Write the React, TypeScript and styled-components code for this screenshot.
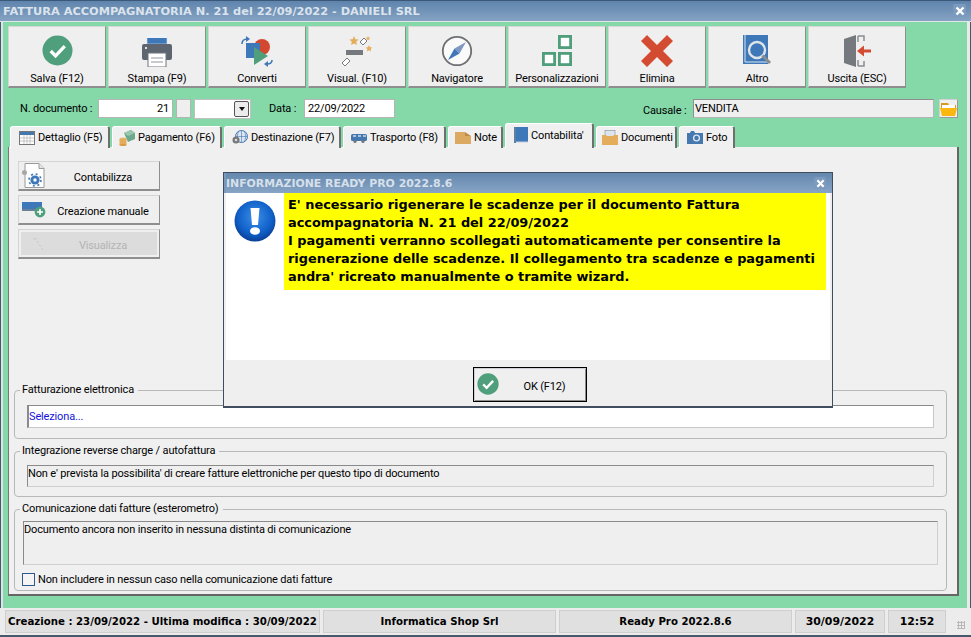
import React from "react";
import styled, { createGlobalStyle } from "styled-components";

const GlobalReset = createGlobalStyle`
  html, body { margin: 0; padding: 0; height: 100%; overflow: hidden; }
  #root { height: 100%; }
  * { box-sizing: border-box; }
  svg { flex: none; }
  button, input { letter-spacing: inherit; }
`;

const uiFont = `Roboto, "Liberation Sans", Arial, sans-serif`;
const boldFont = `"DejaVu Sans", Verdana, sans-serif`;

const Win = styled.div`
  position: relative;
  width: 971px;
  height: 637px;
  display: flex;
  flex-direction: column;
  font-family: ${uiFont};
  font-size: 11px;
  letter-spacing: -0.15px;
  color: #000;
  background: #85d8a8;
`;

const TitleBar = styled.div`
  height: 22px;
  flex: none;
  display: flex;
  align-items: center;
  justify-content: space-between;
  padding: 0 5px 1px 3px;
  background: linear-gradient(#5f84ac, #85a3c4);
  border-top: 1px solid #3c5878;
  border-bottom: 1px solid #dfe8e4;
  font-family: ${boldFont};
  font-weight: 700;
  font-size: 11.33px;
  letter-spacing: 0;
  color: #dbe3ec;
`;

const CloseBox = styled.span<{ $small?: boolean }>`
  width: ${(p) => (p.$small ? 12 : 13)}px;
  height: ${(p) => (p.$small ? 12 : 13)}px;
  display: flex;
  align-items: center;
  justify-content: center;
  background: #7b9abd;
  border-radius: 2px;
`;

const Main = styled.div`
  flex: 1;
  min-height: 0;
  display: flex;
  flex-direction: column;
  padding: 4px 4px 12px 5px;
  border-left: 1px solid #47586c;
  border-right: 1px solid #47586c;
  box-shadow: inset 2px 0 0 #dfe5e4, inset -3px 0 0 #e6ebe8;
`;

const Toolbar = styled.div`
  display: flex;
  gap: 2px;
  margin-left: 2px;
`;

const ToolButton = styled.button`
  width: 98px;
  height: 62px;
  padding: 8px 0 0;
  display: flex;
  flex-direction: column;
  align-items: center;
  justify-content: space-between;
  background: #efefef;
  border: 1px solid #d6d6d6;
  border-right: 1px solid #8e8e8e;
  border-bottom: 2px solid #8e8e8e;
  font: inherit;
  color: #000;
`;

const ToolLabel = styled.span`
  display: block;
  line-height: 14px;
`;

const FormRow = styled.div`
  display: flex;
  align-items: flex-start;
  height: 20px;
  margin-top: 11px;
  padding-left: 14px;
`;

const FieldLabel = styled.label<{ $w: number; $low?: boolean }>`
  width: ${(p) => p.$w}px;
  line-height: ${(p) => (p.$low ? 23 : 19)}px;
  white-space: nowrap;
`;

const TextBox = styled.input<{ $w: number; $right?: boolean; $off?: boolean }>`
  width: ${(p) => p.$w}px;
  height: 19px;
  padding: ${(p) => (p.$off ? "0 0 0 1px" : "0 3px")};
  border: 1px solid #b4b4b4;
  border-top-color: ${(p) => (p.$off ? "#8e8e8e" : "#b4b4b4")};
  border-left-color: ${(p) => (p.$off ? "#8e8e8e" : "#b4b4b4")};
  border-radius: 0;
  outline: none;
  font: inherit;
  color: #000;
  text-align: ${(p) => (p.$right ? "right" : "left")};
  background: ${(p) => (p.$off ? "#efefef" : "#fff")};
`;

const SmallKey = styled.span`
  width: 15px;
  height: 19px;
  margin: 0 3px;
  background: #efefef;
  border: 1px solid #b4b4b4;
`;

const Combo = styled.div`
  width: 57px;
  height: 20px;
  display: flex;
  justify-content: flex-end;
  align-items: center;
  padding-right: 1px;
  background: #fff;
  border: 1px solid #c0c0c0;
  margin-right: 18px;
`;

const ComboArrow = styled.span`
  width: 15px;
  height: 16px;
  display: flex;
  align-items: center;
  justify-content: center;
  background: #ececec;
  border: 1px solid #555;
  border-radius: 2px;
  &::after {
    content: "";
    border: 3px solid transparent;
    border-top: 4px solid #111;
    margin-top: 3px;
  }
`;

const Causale = styled.div`
  margin-left: auto;
  display: flex;
  align-items: flex-start;
  margin-right: 8px;
`;

const FolderButton = styled.span`
  width: 19px;
  height: 19px;
  margin-left: 5px;
  display: flex;
  align-items: center;
  justify-content: center;
  background: #efefef;
  border: 1px solid #d0d0d0;
  border-right-color: #9a9a9a;
  border-bottom-color: #9a9a9a;
`;

const TabStrip = styled.div`
  display: flex;
  align-items: flex-end;
  gap: 2px;
  height: 25px;
  margin-top: 4px;
  margin-left: 4px;
  margin-bottom: -1px;
  position: relative;
  z-index: 1;
`;

const Tab = styled.div<{ $w: number; $pad: number; $active?: boolean }>`
  width: ${(p) => p.$w}px;
  height: ${(p) => (p.$active ? 25 : 22)}px;
  display: flex;
  align-items: center;
  gap: 3px;
  padding-left: ${(p) => p.$pad}px;
  padding-bottom: ${(p) => (p.$active ? 2 : 0)}px;
  background: #f0f0f0;
  border-top: 1px solid #fff;
  border-left: 1px solid #fff;
  border-right: 2px solid #6f6f6f;
  border-radius: 3px 3px 0 0;
  white-space: nowrap;
`;

const Panel = styled.div`
  flex: 1;
  min-height: 0;
  margin-left: 2px;
  width: 951px;
  display: flex;
  flex-direction: column;
  padding: 14px 10px 3px 5px;
  background: #f0f0f0;
  border-left: 1px solid #777;
  border-right: 2px solid #666;
  border-bottom: 2px solid #666;
`;

const Actions = styled.div`
  display: flex;
  flex-direction: column;
  gap: 4px;
  margin-left: 4px;
  width: 142px;
`;

const ActionButton = styled.button<{ $off?: boolean }>`
  position: relative;
  height: 30px;
  padding: 3px 0 0 28px;
  display: flex;
  align-items: center;
  justify-content: center;
  font: inherit;
  color: ${(p) => (p.$off ? "#b4b4b4" : "#000")};
  background: ${(p) => (p.$off ? "#dcdcdc" : "#efefef")};
  border: 1px solid #d4d4d4;
  border-right: 1px solid #8e8e8e;
  border-bottom: 2px solid #8e8e8e;
  box-shadow: ${(p) => (p.$off ? "inset 0 0 0 2px #efefef" : "none")};
`;

const ActionIcon = styled.span`
  position: absolute;
  left: 3px;
  top: 0;
  height: 28px;
  display: flex;
  align-items: center;
`;

const Groups = styled.div`
  margin-top: auto;
  display: flex;
  flex-direction: column;
  gap: 5px;
`;

const Group = styled.fieldset`
  margin: 0;
  padding: 0;
  min-width: 0;
  border: 1px solid #b8b8b8;
  border-radius: 4px;
`;

const GroupTitle = styled.legend`
  margin-left: 5px;
  padding: 0 4px 0 2px;
  line-height: 14px;
`;

const GroupBody = styled.div<{ $top: number; $bottom: number; $side: number }>`
  padding: ${(p) => `${p.$top}px ${p.$side}px ${p.$bottom}px`};
`;

const SelectField = styled.div`
  height: 23px;
  line-height: 22px;
  color: #1414e0;
  background: #fff;
  border: 1px solid #c8c8c8;
  border-top-color: #8a8a8a;
  border-left: 2px solid #8a8a8a;
`;

const ReadOnlyField = styled.div<{ $h: number }>`
  height: ${(p) => p.$h}px;
  padding: 0;
  line-height: 16px;
  background: #efefef;
  border: 1px solid #cfcfcf;
  border-top-color: #8a8a8a;
  border-left-color: #8a8a8a;
`;

const CheckRow = styled.label`
  display: flex;
  align-items: center;
  gap: 3px;
  height: 14px;
  margin-top: 7px;
  margin-left: -1px;
`;

const CheckBoxMark = styled.span`
  width: 13px;
  height: 13px;
  background: #f4f4f4;
  border: 1px solid #2c5a8c;
`;

const StatusBar = styled.div`
  height: 29px;
  flex: none;
  display: flex;
  align-items: center;
  gap: 3px;
  padding: 0 0 0 5px;
  background: #ececec;
  border-bottom: 2px solid #47586c;
  font-family: ${boldFont};
  font-weight: 700;
  letter-spacing: 0;
`;

const StatusCell = styled.div<{ $w: number; $left?: boolean; $digits?: boolean }>`
  width: ${(p) => p.$w}px;
  height: 23px;
  display: flex;
  align-items: center;
  justify-content: ${(p) => (p.$left ? "flex-start" : "center")};
  padding-left: ${(p) => (p.$left ? 2 : 0)}px;
  font-size: ${(p) => (p.$digits ? 10.9 : 10.2)}px;
  background: #e0e0e0;
  border: 1px solid #cfcfcf;
  white-space: nowrap;
`;

const Grip = styled.span`
  margin-left: 8px;
  margin-top: 6px;
  width: 8px;
  height: 8px;
  background: radial-gradient(circle, #b8b8b8 1px, transparent 1.2px) 0 0 / 3px 3px;
`;

const Dialog = styled.div`
  position: absolute;
  left: 223px;
  top: 172px;
  width: 610px;
  height: 236px;
  display: flex;
  flex-direction: column;
  background: #efefef;
  border: 1px solid #3f4d5f;
  border-bottom-width: 2px;
  z-index: 5;
`;

const DialogTitle = styled.div`
  height: 20px;
  flex: none;
  display: flex;
  align-items: center;
  justify-content: space-between;
  padding: 0 6px 0 0;
  background: linear-gradient(#6488ae, #87a4c5);
  border-left: 2px solid #7d99ba;
  font-family: ${boldFont};
  font-weight: 700;
  font-size: 10.9px;
  letter-spacing: 0;
  color: #d7e0ea;
`;

const DialogBody = styled.div`
  height: 167px;
  flex: none;
  margin: 0 2px;
  display: flex;
  background: #fff;
`;

const DialogIcon = styled.div`
  width: 58px;
  flex: none;
  padding: 7px 0 0 8px;
`;

const Message = styled.div`
  width: 542px;
  height: 97px;
  padding: 3px 0 0 4px;
  background: #ffff00;
  font-family: ${boldFont};
  font-weight: 700;
  font-size: 12.9px;
  letter-spacing: 0;
  line-height: 18px;
  white-space: nowrap;
  color: #000;
`;

const DialogFooter = styled.div`
  flex: 1;
  display: flex;
  padding: 7px 0 0 249px;
`;

const OkButton = styled.button`
  position: relative;
  width: 114px;
  height: 35px;
  padding: 3px 0 0 29px;
  font: inherit;
  color: #000;
  background: #efefef;
  border: 1px solid #000;
  box-shadow: inset 1px 1px 0 #cfcfd6, inset -1px -1px 0 #8e8e8e;
`;

const OkIcon = styled.span`
  position: absolute;
  left: 3px;
  top: 5px;
  display: flex;
`;

const Check = ({ size }: { size: number }) => (
  <svg width={size} height={size} viewBox="0 0 32 32">
    <circle cx="16" cy="16" r="15.5" fill="#4f9f7d" />
    <path d="M9 16.5l5 5 9.5-10" fill="none" stroke="#fff" strokeWidth="3.4" />
  </svg>
);

const PrintIcon = () => (
  <svg width="32" height="32" viewBox="0 0 32 32">
    <rect x="6" y="0" width="20" height="9" fill="#3f78b8" stroke="#d8e4f0" strokeWidth="0.6" />
    <rect x="6" y="0" width="20" height="3" fill="#eef3f8" />
    <rect x="1" y="9" width="30" height="16" rx="2" fill="#5d6670" />
    <rect x="4" y="12" width="2" height="2" fill="#e0e0e0" />
    <rect x="7" y="18" width="18" height="14" fill="#fff" stroke="#6f7780" strokeWidth="1" />
    <path d="M10 23h12M10 27h12" stroke="#8f979f" strokeWidth="1" />
  </svg>
);

const ConvertIcon = () => (
  <svg width="32" height="32" viewBox="0 0 32 32">
    <circle cx="21" cy="12" r="8" fill="#d3492f" />
    <rect x="5" y="8" width="14" height="15" fill="#3f78b8" />
    <path d="M13 12l14 9-14 9z" fill="#4f9f7d" />
    <path d="M1 9c0-3 2-5 5-5" fill="none" stroke="#3f78b8" strokeWidth="1.6" />
    <path d="M5 1l4 3-4 3z" fill="#3f78b8" />
    <path d="M31 25c0 3-2 4-5 4" fill="none" stroke="#3f78b8" strokeWidth="1.6" />
    <path d="M27 26l-4 3 4 3z" fill="#3f78b8" />
  </svg>
);

const WandIcon = () => (
  <svg width="32" height="32" viewBox="0 0 32 32">
    <rect x="5" y="15" width="17" height="5" fill="#75787c" />
    <path d="M19 7l4-4 3 3-4 4z" fill="#fff" stroke="#77797c" />
    <path d="M1 28l5-5 3 3-5 5z" fill="#fff" stroke="#77797c" />
    <path d="M13 1l1.4 3.2 3.2.4-2.4 2.2.7 3.2-2.9-1.6-2.9 1.6.7-3.2L8.4 4.6l3.2-.4z" fill="#e3ad5c" />
    <path d="M28 10l1 2.2 2.3.3-1.7 1.6.5 2.3-2.1-1.1-2.1 1.1.5-2.3-1.7-1.6 2.3-.3z" fill="#e3ad5c" />
    <path d="M27 1l.7 1.5 1.6.2-1.2 1.1.3 1.6-1.4-.8-1.4.8.3-1.6-1.2-1.1 1.6-.2z" fill="#e3ad5c" />
  </svg>
);

const CompassIcon = () => (
  <svg width="32" height="32" viewBox="0 0 32 32">
    <circle cx="16" cy="16" r="14.2" fill="#fafafa" stroke="#6d6f72" strokeWidth="1.8" />
    <path d="M25 7L18.5 18.5 13.5 13.5z" fill="#7f98c2" />
    <path d="M7 25l6.5-11.5 5 5z" fill="#3f78b8" />
  </svg>
);

const GridIcon = () => (
  <svg width="32" height="32" viewBox="0 0 32 32">
    <g fill="#fff" stroke="#4f9f7d" strokeWidth="2.8">
      <rect x="18.4" y="1.4" width="11.2" height="11.2" />
      <rect x="2.4" y="18.4" width="11.2" height="11.2" />
      <rect x="18.4" y="18.4" width="11.2" height="11.2" />
    </g>
  </svg>
);

const CrossIcon = () => (
  <svg width="32" height="32" viewBox="0 0 32 32">
    <path d="M6 0l10 10L26 0l6 6-10 10 10 10-6 6-10-10L6 32l-6-6 10-10L0 6z" fill="#d34b30" />
  </svg>
);

const BookSearchIcon = () => (
  <svg width="32" height="32" viewBox="0 0 32 32">
    <rect x="2" y="0" width="25" height="29" fill="#3f78b8" />
    <path d="M4 0v27h23" fill="none" stroke="#d9e5f0" strokeWidth="1" />
    <circle cx="16" cy="15" r="8" fill="#3f78b8" stroke="#dfe4e8" strokeWidth="2.4" />
    <path d="M21.5 20.5L29 28" stroke="#8a8d90" strokeWidth="3" />
  </svg>
);

const DoorIcon = () => (
  <svg width="32" height="32" viewBox="0 0 32 32">
    <path d="M17 1v6M17 25v6M17 1h6v5M17 31h6v-5" fill="none" stroke="#8a8d90" strokeWidth="1.5" />
    <path d="M3 4L15 0v32L3 28z" fill="#75787c" />
    <path d="M30 14.5v3H20v-3z" fill="#d34b30" />
    <path d="M16 16l7-5.5v11z" fill="#d34b30" />
  </svg>
);

const CalendarTab = () => (
  <svg width="16" height="14" viewBox="0 0 16 14">
    <rect x="0.5" y="0.5" width="15" height="13" fill="#fff" stroke="#777" />
    <rect x="1" y="1" width="14" height="3" fill="#4678b0" />
    <path d="M1 7h14M1 10h14M5 4v9M8 4v9M11 4v9" stroke="#b0b0b0" strokeWidth="0.7" />
  </svg>
);

const MoneyTab = () => (
  <svg width="16" height="16" viewBox="0 0 16 16">
    <path d="M5 3l7-3 4 3v6l-7 3z" fill="#6ca88b" />
    <path d="M5 3l7-3 4 3-7 3z" fill="#9ac6ae" />
    <ellipse cx="4" cy="9" rx="3.5" ry="1.6" fill="#e6b469" />
    <rect x="0.5" y="9" width="7" height="6" fill="#e3ad5c" />
    <ellipse cx="4" cy="15" rx="3.5" ry="1" fill="#d79c45" />
  </svg>
);

const GlobeTab = () => (
  <svg width="16" height="16" viewBox="0 0 16 16">
    <circle cx="9.5" cy="6.5" r="6" fill="#dbe5f1" stroke="#4678b0" />
    <path d="M3.5 6.5h12M9.5.5v12M6.5 1.5c-1.5 3-1.5 7 0 10M12.5 1.5c1.5 3 1.5 7 0 10" fill="none" stroke="#4678b0" strokeWidth="0.6" />
    <circle cx="4" cy="10" r="3.5" fill="#777" />
    <circle cx="4" cy="10" r="1.3" fill="#ddd" />
  </svg>
);

const TruckTab = () => (
  <svg width="16" height="12" viewBox="0 0 16 12">
    <rect x="0" y="2" width="16" height="7" rx="1.5" fill="#4678b0" />
    <path d="M2 4h3M7 4h3M12 4h3" stroke="#cfdcec" strokeWidth="1.4" />
    <circle cx="4" cy="9.5" r="1.6" fill="#777" />
    <circle cx="12" cy="9.5" r="1.6" fill="#777" />
  </svg>
);

const NoteTab = () => (
  <svg width="16" height="16" viewBox="0 0 16 16">
    <path d="M0 2h10v4h6v8H0z" fill="#dba95f" />
    <path d="M10 2l6 4h-6z" fill="#bd8b45" />
  </svg>
);

const BookTab = () => (
  <svg width="14" height="16" viewBox="0 0 14 16">
    <rect x="0" y="0" width="14" height="15" fill="#3f78b8" />
    <rect x="0" y="0" width="2" height="16" fill="#5f7f9f" />
    <path d="M2 15h12" stroke="#ccd" />
  </svg>
);

const DocsTab = () => (
  <svg width="16" height="16" viewBox="0 0 16 16">
    <rect x="3" y="0.5" width="10" height="8" fill="#dce4ee" stroke="#8e9aa8" strokeWidth="0.7" />
    <path d="M0 5h4l1 1h6l1-1h4v10H0z" fill="#e3ad5c" />
  </svg>
);

const CameraTab = () => (
  <svg width="16" height="13" viewBox="0 0 16 13">
    <path d="M0 2h3l1-2h3l1 2h8v11H0z" fill="#4678b0" />
    <circle cx="9.5" cy="7" r="3.6" fill="#dbe5f1" />
    <circle cx="9.5" cy="7" r="2.2" fill="#4678b0" />
  </svg>
);

const FolderIcon = () => (
  <svg width="17" height="14" viewBox="0 0 17 14">
    <path d="M1 1h7l1 2h7v3H1z" fill="#d99a1c" />
    <rect x="2" y="3" width="13" height="3" fill="#fff" />
    <path d="M0 6h17l-2 8H2z" fill="#f9b70f" />
  </svg>
);

const GearDocIcon = () => (
  <svg width="24" height="26" viewBox="0 0 24 26">
    <path d="M3 .5h14l5 5v19H3z" fill="#fff" stroke="#9a9a9a" />
    <path d="M17 .5v5h5" fill="#e4e4e4" stroke="#9a9a9a" />
    <circle cx="2.5" cy="9.5" r="2.5" fill="#a8a8a8" />
    <circle cx="13" cy="17" r="4.6" fill="#3f78b8" />
    <circle cx="13" cy="17" r="6" fill="none" stroke="#3f78b8" strokeWidth="1.6" strokeDasharray="2 2.7" />
    <circle cx="13" cy="17" r="1.7" fill="#fff" />
  </svg>
);

const CardPlusIcon = () => (
  <svg width="24" height="16" viewBox="0 0 24 16">
    <rect x="0" y="0" width="20" height="8" fill="#3f78b8" />
    <rect x="0" y="7" width="19" height="2" fill="#6a7f98" />
    <circle cx="18" cy="10" r="5.4" fill="#4f9f7d" />
    <path d="M15 10h6M18 7v6" stroke="#fff" strokeWidth="1.6" />
  </svg>
);

const WandFaint = () => (
  <svg width="24" height="24" viewBox="0 0 24 24">
    <path d="M13 6l8 12M13 6l-2 2" stroke="#c4c4c4" strokeWidth="1" strokeDasharray="2 2" fill="none" />
  </svg>
);

const InfoIcon = () => (
  <svg width="42" height="42" viewBox="0 0 42 42">
    <defs>
      <radialGradient id="infoBall" cx="50%" cy="40%" r="60%">
        <stop offset="0%" stopColor="#3c8fe8" />
        <stop offset="70%" stopColor="#0f5fc8" />
        <stop offset="100%" stopColor="#0a3f96" />
      </radialGradient>
    </defs>
    <circle cx="21" cy="21" r="20.5" fill="url(#infoBall)" />
    <path d="M16.5 8h9l-1.5 17h-6z" fill="#fff" />
    <ellipse cx="21" cy="31" rx="5" ry="3.8" fill="#fff" />
  </svg>
);

const XMark = ({ size }: { size: number }) => (
  <svg width={size} height={size} viewBox="0 0 10 10">
    <path d="M1.5 1.5l7 7M8.5 1.5l-7 7" stroke="#fff" strokeWidth="2.4" />
  </svg>
);

const tools = [
  { label: "Salva (F12)", icon: <Check size={31} /> },
  { label: "Stampa (F9)", icon: <PrintIcon /> },
  { label: "Converti", icon: <ConvertIcon /> },
  { label: "Visual. (F10)", icon: <WandIcon /> },
  { label: "Navigatore", icon: <CompassIcon /> },
  { label: "Personalizzazioni", icon: <GridIcon /> },
  { label: "Elimina", icon: <CrossIcon /> },
  { label: "Altro", icon: <BookSearchIcon /> },
  { label: "Uscita (ESC)", icon: <DoorIcon /> },
];

const tabs = [
  { label: "Dettaglio (F5)", w: 100, pad: 8, icon: <CalendarTab /> },
  { label: "Pagamento (F6)", w: 110, pad: 6, icon: <MoneyTab /> },
  { label: "Destinazione (F7)", w: 117, pad: 7, icon: <GlobeTab /> },
  { label: "Trasporto (F8)", w: 103, pad: 7, icon: <TruckTab /> },
  { label: "Note", w: 55, pad: 6, icon: <NoteTab /> },
  { label: "Contabilita'", w: 89, pad: 8, icon: <BookTab />, active: true },
  { label: "Documenti", w: 81, pad: 5, icon: <DocsTab /> },
  { label: "Foto", w: 56, pad: 7, icon: <CameraTab /> },
];

export default function App() {
  return (
    <Win>
      <GlobalReset />
      <TitleBar>
        <span>FATTURA ACCOMPAGNATORIA N. 21 del 22/09/2022 - DANIELI SRL</span>
        <CloseBox>
          <XMark size={10} />
        </CloseBox>
      </TitleBar>

      <Main>
        <Toolbar>
          {tools.map((t) => (
            <ToolButton key={t.label}>
              {t.icon}
              <ToolLabel>{t.label}</ToolLabel>
            </ToolButton>
          ))}
        </Toolbar>

        <FormRow>
          <FieldLabel $w={78}>N. documento :</FieldLabel>
          <TextBox $w={75} $right readOnly value="21" />
          <SmallKey />
          <Combo>
            <ComboArrow />
          </Combo>
          <FieldLabel $w={35}>Data :</FieldLabel>
          <TextBox $w={91} readOnly value="22/09/2022" />
          <Causale>
            <FieldLabel $w={50} $low>
              Causale :
            </FieldLabel>
            <TextBox $w={241} $off readOnly value="VENDITA" />
            <FolderButton>
              <FolderIcon />
            </FolderButton>
          </Causale>
        </FormRow>

        <TabStrip>
          {tabs.map((t) => (
            <Tab key={t.label} $w={t.w} $pad={t.pad} $active={t.active}>
              {t.icon}
              {t.label}
            </Tab>
          ))}
        </TabStrip>

        <Panel>
          <Actions>
            <ActionButton>
              <ActionIcon>
                <GearDocIcon />
              </ActionIcon>
              Contabilizza
            </ActionButton>
            <ActionButton>
              <ActionIcon>
                <CardPlusIcon />
              </ActionIcon>
              Creazione manuale
            </ActionButton>
            <ActionButton $off>
              <ActionIcon>
                <WandFaint />
              </ActionIcon>
              Visualizza
            </ActionButton>
          </Actions>

          <Groups>
            <Group>
              <GroupTitle>Fatturazione elettronica</GroupTitle>
              <GroupBody $top={8} $bottom={10} $side={12}>
                <SelectField>Seleziona...</SelectField>
              </GroupBody>
            </Group>
            <Group>
              <GroupTitle>Integrazione reverse charge / autofattura</GroupTitle>
              <GroupBody $top={7} $bottom={9} $side={12}>
                <ReadOnlyField $h={22}>
                  Non e' prevista la possibilita' di creare fatture elettroniche per questo tipo di documento
                </ReadOnlyField>
              </GroupBody>
            </Group>
            <Group>
              <GroupTitle>Comunicazione dati fatture (esterometro)</GroupTitle>
              <GroupBody $top={5} $bottom={4} $side={8}>
                <ReadOnlyField $h={44}>Documento ancora non inserito in nessuna distinta di comunicazione</ReadOnlyField>
                <CheckRow>
                  <CheckBoxMark />
                  Non includere in nessun caso nella comunicazione dati fatture
                </CheckRow>
              </GroupBody>
            </Group>
          </Groups>
        </Panel>
      </Main>

      <StatusBar>
        <StatusCell $w={315} $left>
          Creazione : 23/09/2022 - Ultima modifica : 30/09/2022
        </StatusCell>
        <StatusCell $w={233}>Informatica Shop Srl</StatusCell>
        <StatusCell $w={233}>Ready Pro 2022.8.6</StatusCell>
        <StatusCell $w={90} $digits>
          30/09/2022
        </StatusCell>
        <StatusCell $w={58} $digits>
          12:52
        </StatusCell>
        <Grip />
      </StatusBar>

      <Dialog>
        <DialogTitle>
          <span>INFORMAZIONE READY PRO 2022.8.6</span>
          <CloseBox $small>
            <XMark size={9} />
          </CloseBox>
        </DialogTitle>
        <DialogBody>
          <DialogIcon>
            <InfoIcon />
          </DialogIcon>
          <Message>
            E' necessario rigenerare le scadenze per il documento Fattura
            <br />
            accompagnatoria N. 21 del 22/09/2022
            <br />
            I pagamenti verranno scollegati automaticamente per consentire la
            <br />
            rigenerazione delle scadenze. Il collegamento tra scadenze e pagamenti
            <br />
            andra' ricreato manualmente o tramite wizard.
          </Message>
        </DialogBody>
        <DialogFooter>
          <OkButton>
            <OkIcon>
              <Check size={22} />
            </OkIcon>
            OK (F12)
          </OkButton>
        </DialogFooter>
      </Dialog>
    </Win>
  );
}
